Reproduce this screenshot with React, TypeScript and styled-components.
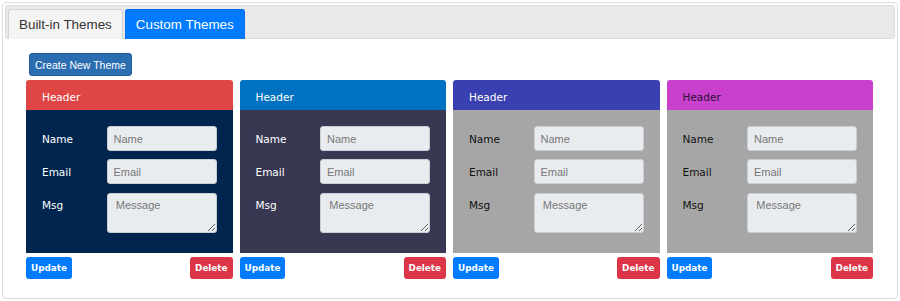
import styled, { createGlobalStyle } from 'styled-components';

const GlobalStyle = createGlobalStyle`
  body {
    margin: 0;
    background: #fff;
    font-family: "Liberation Sans", Arial, sans-serif;
  }
`;

interface Theme {
  header: string;
  headerText: string;
  body: string;
  label: string;
}

const themes: Theme[] = [
  { header: '#e04545', headerText: '#ffffff', body: '#00264f', label: '#ffffff' },
  { header: '#0072c1', headerText: '#ffffff', body: '#383852', label: '#ffffff' },
  { header: '#3a3fb2', headerText: '#ffffff', body: '#a6a6a6', label: '#111111' },
  { header: '#c840cc', headerText: '#2a1236', body: '#a6a6a6', label: '#111111' },
];

export default function App() {
  return (
    <>
      <GlobalStyle />
      <Panel>
        <TabStrip>
          <Tab>Built-in Themes</Tab>
          <Tab $active>Custom Themes</Tab>
        </TabStrip>
        <Content>
          <CreateButton>Create New Theme</CreateButton>
          <CardGrid>
            {themes.map((t, i) => (
              <CardColumn key={i}>
                <Card>
                  <CardHeader $bg={t.header} $color={t.headerText}>
                    Header
                  </CardHeader>
                  <CardBody $bg={t.body}>
                    <FormRow>
                      <Label $color={t.label}>Name</Label>
                      <Input placeholder="Name" />
                    </FormRow>
                    <FormRow>
                      <Label $color={t.label}>Email</Label>
                      <Input placeholder="Email" />
                    </FormRow>
                    <FormRow>
                      <Label $color={t.label}>Msg</Label>
                      <TextArea placeholder="Message" />
                    </FormRow>
                  </CardBody>
                </Card>
                <Actions>
                  <SmallButton $bg="#007bff">Update</SmallButton>
                  <SmallButton $bg="#dc3545">Delete</SmallButton>
                </Actions>
              </CardColumn>
            ))}
          </CardGrid>
        </Content>
      </Panel>
    </>
  );
}

const Panel = styled.div`
  box-sizing: border-box;
  margin: 2px;
  width: 896px;
  height: 297px;
  border: 1px solid #dcdcdc;
  border-radius: 4px;
  padding: 2px;
`;

const TabStrip = styled.div`
  box-sizing: border-box;
  height: 34px;
  background: #e9e9e9;
  border: 1px solid #dddddd;
  border-radius: 3px;
  padding: 3px 0 0 2px;
  display: flex;
  align-items: flex-end;
  gap: 2px;
`;

const Tab = styled.div<{ $active?: boolean }>`
  box-sizing: border-box;
  height: 30px;
  margin-bottom: -1px;
  padding: 0 10px;
  display: flex;
  align-items: center;
  font-size: 13.4px;
  border: 1px solid ${(p) => (p.$active ? '#0070f0' : '#d3d3d3')};
  border-bottom: none;
  border-radius: 3px 3px 0 0;
  background: ${(p) => (p.$active ? '#007bff' : '#f4f4f4')};
  color: ${(p) => (p.$active ? '#ffffff' : '#333333')};
`;

const Content = styled.div`
  padding: 14px 0 0 21px;
`;

const CreateButton = styled.button`
  box-sizing: border-box;
  margin-left: 3px;
  height: 23px;
  padding: 0 5px;
  border: 1px solid #1f5f99;
  border-radius: 3px;
  background: #2a6db0;
  color: #fff;
  font-family: "Liberation Sans", Arial, sans-serif;
  font-size: 10.5px;
`;

const CardGrid = styled.div`
  margin-top: 4px;
  display: grid;
  grid-template-columns: repeat(4, 206.5px);
  column-gap: 7px;
`;

const CardColumn = styled.div`
  display: flex;
  flex-direction: column;
`;

const Card = styled.div`
  border-radius: 3px 3px 0 0;
  overflow: hidden;
`;

const CardHeader = styled.div<{ $bg: string; $color: string }>`
  box-sizing: border-box;
  height: 30px;
  padding: 4px 0 0 16px;
  display: flex;
  align-items: center;
  background: ${(p) => p.$bg};
  color: ${(p) => p.$color};
  font-family: "DejaVu Sans", Verdana, sans-serif;
  font-size: 10.5px;
`;

const CardBody = styled.div<{ $bg: string }>`
  box-sizing: border-box;
  height: 143px;
  padding: 16px 16px 0 16px;
  background: ${(p) => p.$bg};
  display: flex;
  flex-direction: column;
  gap: 7px;
`;

const FormRow = styled.div`
  display: flex;
  align-items: flex-start;
`;

const Label = styled.div<{ $color: string }>`
  width: 65px;
  padding-top: 1px;
  line-height: 25px;
  color: ${(p) => p.$color};
  font-family: "DejaVu Sans", Verdana, sans-serif;
  font-size: 10.5px;
`;

const fieldStyles = `
  box-sizing: border-box;
  width: 110px;
  border: 1px solid #c9ced4;
  border-radius: 3px;
  background: #e9ecef;
  font-family: "Liberation Sans", Arial, sans-serif;
  font-size: 11px;
  color: #495057;
  outline: none;
  &::placeholder { color: #777; }
`;

const Input = styled.input`
  ${fieldStyles}
  height: 25px;
  padding: 0 6px;
`;

const TextArea = styled.textarea`
  ${fieldStyles}
  height: 40px;
  margin-top: 1px;
  padding: 5px 8px;
  resize: vertical;
`;

const Actions = styled.div`
  margin-top: 4px;
  display: flex;
  justify-content: space-between;
`;

const SmallButton = styled.button<{ $bg: string }>`
  box-sizing: border-box;
  height: 22px;
  padding: 0 5px;
  border: none;
  border-radius: 3px;
  background: ${(p) => p.$bg};
  color: #fff;
  font-family: "DejaVu Sans", Verdana, sans-serif;
  font-weight: bold;
  font-size: 8.8px;
`;
